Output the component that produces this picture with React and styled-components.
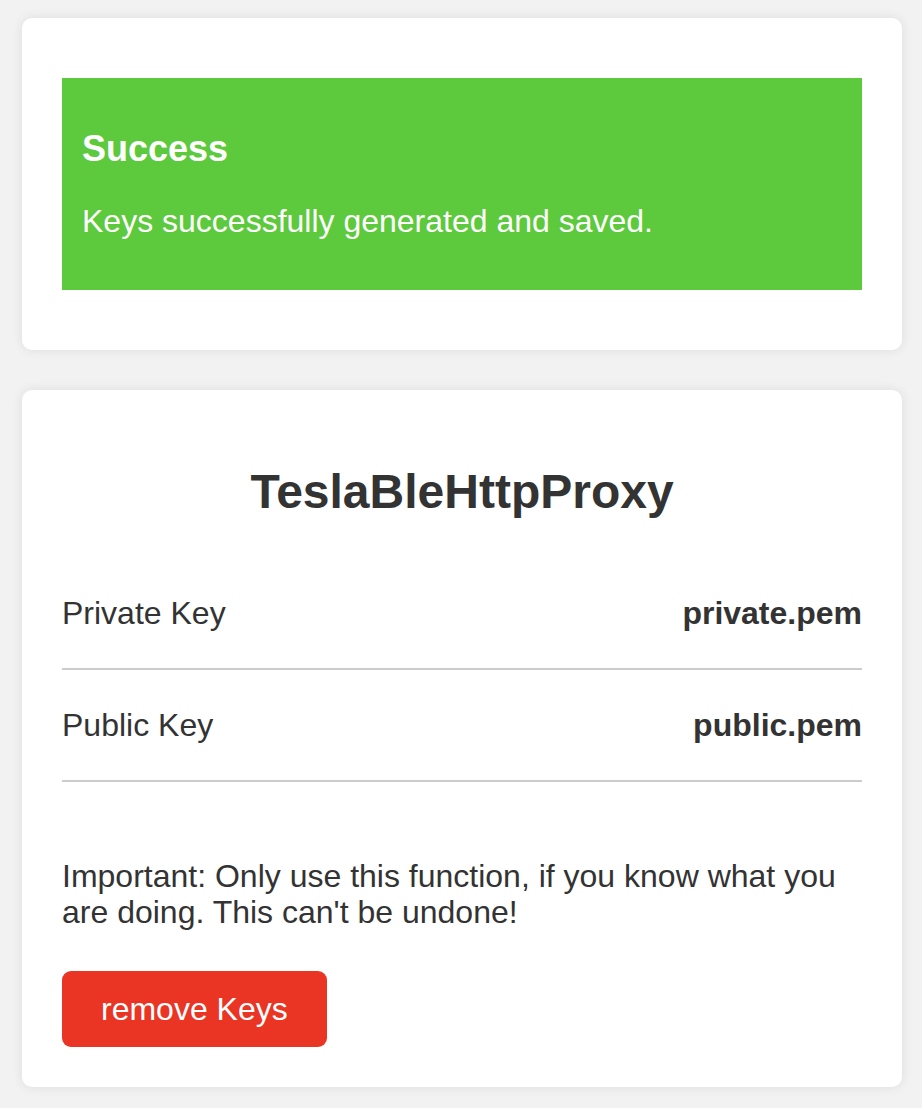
import React from "react";
import styled, { createGlobalStyle } from "styled-components";

const GlobalStyle = createGlobalStyle`
  html, body {
    margin: 0;
    padding: 0;
    background: #f2f2f2;
  }

  body {
    font-family: "Liberation Sans", Arial, Helvetica, sans-serif;
    color: #333;
  }
`;

const Page = styled.main`
  display: flex;
  flex-direction: column;
  gap: 40px;
  padding: 18px 20px 22px 22px;
`;

const Card = styled.section`
  width: 880px;
  box-sizing: border-box;
  background: #fff;
  border-radius: 10px;
  box-shadow: 0 0 12px rgba(0, 0, 0, 0.09);
  padding: ${(p) => p.$padding || "40px"};
`;

const Alert = styled.div`
  background: #5dc93c;
  color: #fff;
  padding: 50px 20px 51px;
`;

const AlertTitle = styled.h4`
  margin: 0 0 33px;
  font-size: 36px;
  line-height: 42px;
  font-weight: 700;
`;

const AlertText = styled.p`
  margin: 0;
  font-size: 32px;
  line-height: 36px;
`;

const Title = styled.h2`
  margin: 34px 0 38px;
  text-align: center;
  font-size: 48px;
  line-height: 56px;
  font-weight: 700;
  color: #333;
`;

const KeyList = styled.div`
  display: flex;
  flex-direction: column;
`;

const KeyRow = styled.div`
  display: flex;
  justify-content: space-between;
  align-items: center;
  padding: 36px 0;
  border-bottom: 2px solid #cccccc;
  font-size: 32px;
  line-height: 38px;
`;

const KeyLabel = styled.span`
  color: #333;
`;

const KeyFile = styled.span`
  font-weight: 700;
  color: #333;
`;

const Warning = styled.p`
  margin: 76px 0 41px;
  font-size: 32px;
  line-height: 36px;
  color: #333;
`;

const DangerButton = styled.button`
  display: block;
  padding: 20px 39px;
  border: none;
  border-radius: 9px;
  background: #ea3424;
  color: #fff;
  font-family: inherit;
  font-size: 32px;
  line-height: 36px;
  cursor: pointer;

  &:hover {
    background: #d12a1c;
  }
`;

const keys = [
  { label: "Private Key", file: "private.pem" },
  { label: "Public Key", file: "public.pem" },
];

export default function App() {
  return (
    <>
      <GlobalStyle />
      <Page>
        <Card $padding="60px 40px">
          <Alert>
            <AlertTitle>Success</AlertTitle>
            <AlertText>Keys successfully generated and saved.</AlertText>
          </Alert>
        </Card>

        <Card>
          <Title>TeslaBleHttpProxy</Title>
          <KeyList>
            {keys.map((k) => (
              <KeyRow key={k.file}>
                <KeyLabel>{k.label}</KeyLabel>
                <KeyFile>{k.file}</KeyFile>
              </KeyRow>
            ))}
          </KeyList>
          <Warning>
            Important: Only use this function, if you know what you are doing. This can't be undone!
          </Warning>
          <DangerButton>remove Keys</DangerButton>
        </Card>
      </Page>
    </>
  );
}
